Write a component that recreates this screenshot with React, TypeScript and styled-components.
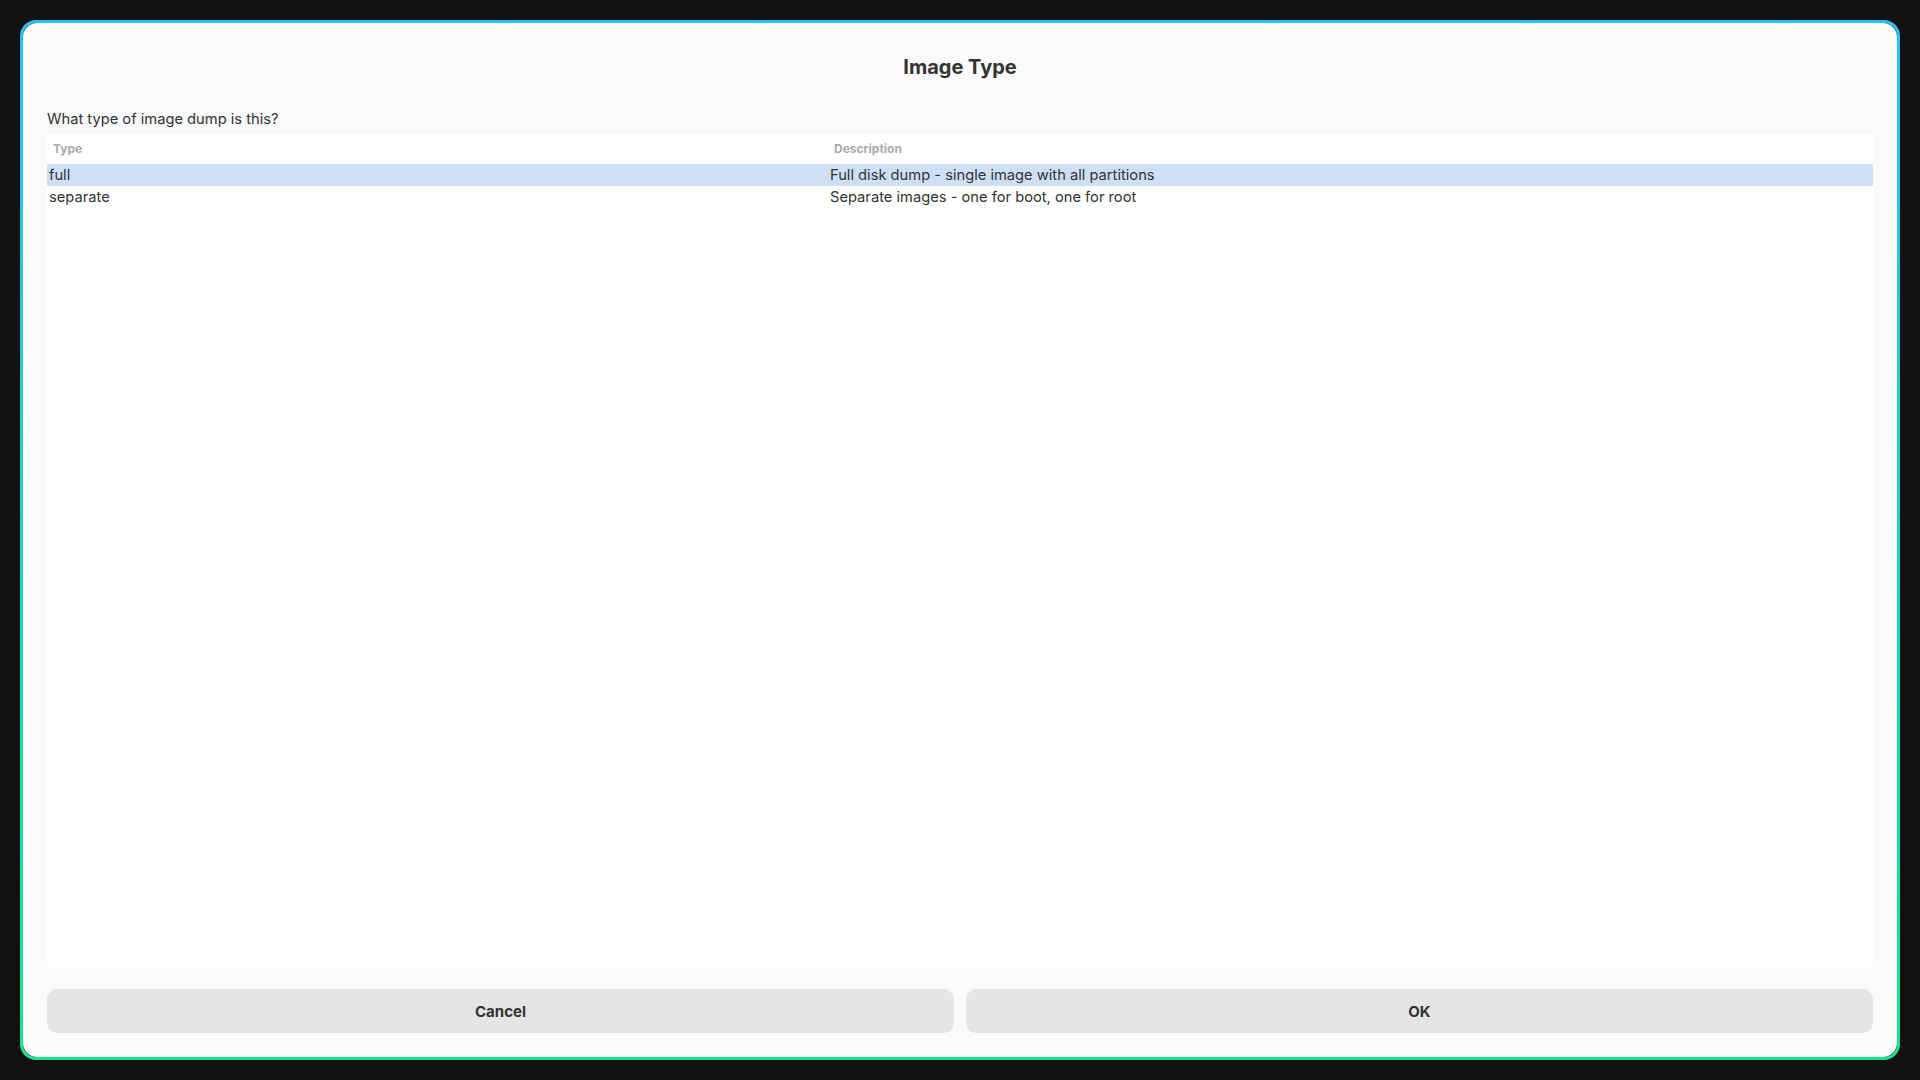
import React from "react";
import styled, { createGlobalStyle } from "styled-components";

const Global = createGlobalStyle`
  html, body { margin: 0; padding: 0; background: #111111; }
  body { font-family: Inter, "Noto Sans", "Liberation Sans", sans-serif; color: #333333; }
  * { box-sizing: border-box; }
`;

const Page = styled.div`
  width: 1920px;
  height: 1080px;
  padding: 20px;
  display: flex;
`;

const Frame = styled.div`
  flex: 1;
  display: flex;
  border: 3px solid transparent;
  border-radius: 16px;
  background: linear-gradient(#111111, #111111) padding-box,
    linear-gradient(180deg, #29c3ee 0%, #22d2c4 50%, #18e48e 100%) border-box;
`;

const Panel = styled.div`
  flex: 1;
  display: flex;
  flex-direction: column;
  background: #fafafa;
  border-radius: 14px;
  padding: 24px;
`;

const Title = styled.h1`
  margin: 0;
  height: 40px;
  line-height: 40px;
  text-align: center;
  font-size: 20px;
  font-weight: 700;
  color: #333333;
`;

const Prompt = styled.p`
  margin: 22px 0 5px 0;
  font-size: 14.7px;
  line-height: 20px;
  color: #333333;
`;

const Table = styled.div`
  flex: 1;
  background: #ffffff;
  display: flex;
  flex-direction: column;
`;

const Row = styled.div<{ $selected?: boolean }>`
  display: grid;
  grid-template-columns: 781px 1fr;
  height: 22px;
  align-items: center;
  background: ${(p) => (p.$selected ? "#cde0f6" : "transparent")};
`;

const HeaderRow = styled(Row)`
  height: 30px;
  padding-bottom: 1px;
`;

const HeadCell = styled.div`
  padding-left: 6px;
  font-size: 12px;
  font-weight: 700;
  color: #aaaaaa;
`;

const Cell = styled.div`
  padding-left: 2px;
  font-size: 14.7px;
  color: #333333;
  white-space: nowrap;
`;

const Buttons = styled.div`
  margin-top: 22px;
  display: grid;
  grid-template-columns: 1fr 1fr;
  gap: 12px;
`;

const Button = styled.button`
  height: 44px;
  border: none;
  border-radius: 10px;
  background: #e5e5e5;
  font-family: inherit;
  font-size: 15px;
  font-weight: 700;
  color: #333333;
  cursor: pointer;
`;

const rows = [
  { type: "full", desc: "Full disk dump - single image with all partitions", selected: true },
  { type: "separate", desc: "Separate images - one for boot, one for root", selected: false },
];

export default function App() {
  return (
    <>
      <Global />
      <Page>
        <Frame>
          <Panel>
            <Title>Image Type</Title>
            <Prompt>What type of image dump is this?</Prompt>
            <Table>
              <HeaderRow>
                <HeadCell>Type</HeadCell>
                <HeadCell>Description</HeadCell>
              </HeaderRow>
              {rows.map((r) => (
                <Row key={r.type} $selected={r.selected}>
                  <Cell>{r.type}</Cell>
                  <Cell>{r.desc}</Cell>
                </Row>
              ))}
            </Table>
            <Buttons>
              <Button>Cancel</Button>
              <Button>OK</Button>
            </Buttons>
          </Panel>
        </Frame>
      </Page>
    </>
  );
}
